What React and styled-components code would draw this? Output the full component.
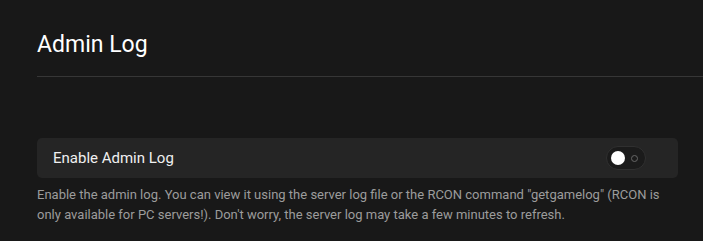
import React, { useState } from 'react';
import styled, { createGlobalStyle } from 'styled-components';

const Global = createGlobalStyle`
  html, body {
    margin: 0;
    padding: 0;
    background: #181818;
  }
  body {
    font-family: Roboto, "Noto Sans", "Liberation Sans", sans-serif;
  }
`;

const Page = styled.div`
  padding-left: 37px;
  height: 241px;
  overflow: hidden;
`;

const Header = styled.div`
  padding: 30px 0 16px;
  border-bottom: 1px solid #363636;
  margin-bottom: 1px;
`;

const Title = styled.h1`
  margin: 0;
  font-size: 23px;
  line-height: 30px;
  font-weight: 400;
  color: #ffffff;
`;

const Content = styled.div`
  padding: 60px 25px 0 0;
`;

const Card = styled.div`
  height: 40px;
  display: flex;
  align-items: center;
  justify-content: space-between;
  padding: 0 32px 0 16px;
  background: #252525;
  border-radius: 5px;
`;

const Label = styled.span`
  font-size: 15px;
  color: #f0f0f0;
`;

const Switch = styled.button`
  width: 40px;
  height: 24px;
  border-radius: 12px;
  border: 1px solid #303030;
  background: #1b1b1b;
  cursor: pointer;
  display: flex;
  align-items: center;
  justify-content: space-between;
  padding: 0 7px 0 4px;
  box-sizing: border-box;
`;

const Knob = styled.span`
  width: 14px;
  height: 14px;
  border-radius: 50%;
  background: ${p => (p.$on ? '#4caf50' : '#ffffff')};
`;

const Ring = styled.span`
  width: 5px;
  height: 5px;
  border-radius: 50%;
  border: 1.5px solid #666666;
`;

const Help = styled.p`
  margin: 7px 0 0;
  font-size: 13px;
  line-height: 20px;
  color: #9c9c9c;
`;

export default function App() {
  const [on, setOn] = useState(false);
  return (
    <Page>
      <Global />
      <Header>
        <Title>Admin Log</Title>
      </Header>
      <Content>
        <Card>
          <Label>Enable Admin Log</Label>
          <Switch onClick={() => setOn(!on)} aria-pressed={on}>
            <Knob $on={on} />
            <Ring />
          </Switch>
        </Card>
        <Help>
          Enable the admin log. You can view it using the server log file or the RCON command "getgamelog" (RCON is
          <br />
          only available for PC servers!). Don't worry, the server log may take a few minutes to refresh.
        </Help>
      </Content>
    </Page>
  );
}
